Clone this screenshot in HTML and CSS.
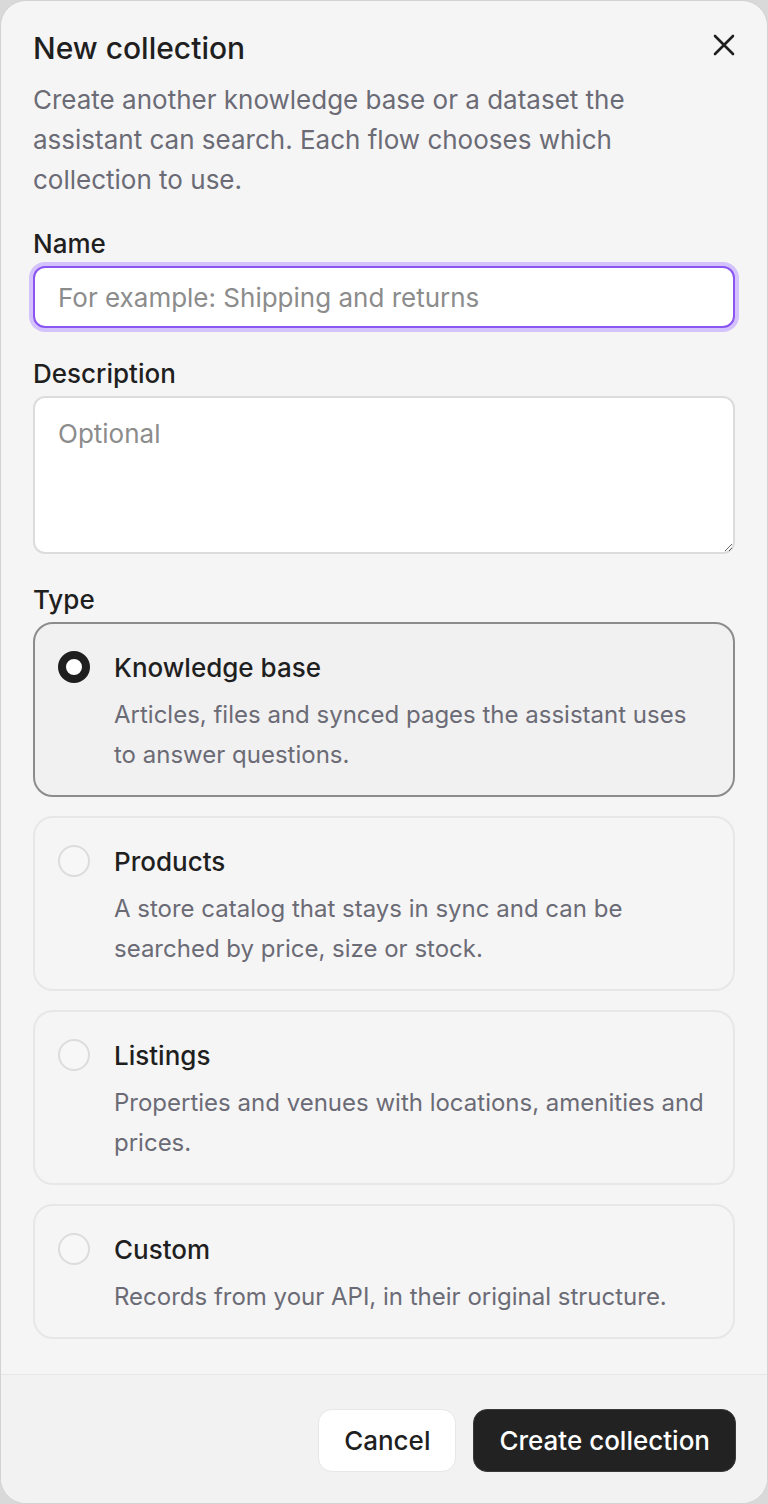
FILE: index.html
```html
<!DOCTYPE html>
<html lang="en">
<head>
<meta charset="utf-8">
<title>New collection</title>
<link rel="stylesheet" href="styles.css">
</head>
<body>
<div class="dialog">
  <div class="content">
    <div class="header">
      <h1 class="title">New collection</h1>
      <button class="close" aria-label="Close">
        <svg width="24" height="24" viewBox="0 0 24 24" fill="none" stroke="#1f1f1f" stroke-width="2.6" stroke-linecap="round"><path d="M3 3L21 21M21 3L3 21"/></svg>
      </button>
    </div>
    <p class="lead">Create another knowledge base or a dataset the assistant can search. Each flow chooses which collection to use.</p>

    <label class="label label-first">Name</label>
    <input class="input" type="text" placeholder="For example: Shipping and returns">

    <label class="label">Description</label>
    <textarea class="textarea" placeholder="Optional"></textarea>

    <div class="label">Type</div>
    <div class="options">
      <div class="option option-selected">
        <span class="radio radio-on"></span>
        <div class="option-text">
          <div class="option-title">Knowledge base</div>
          <div class="option-desc">Articles, files and synced pages the assistant uses to answer questions.</div>
        </div>
      </div>
      <div class="option">
        <span class="radio"></span>
        <div class="option-text">
          <div class="option-title">Products</div>
          <div class="option-desc">A store catalog that stays in sync and can be searched by price, size or stock.</div>
        </div>
      </div>
      <div class="option">
        <span class="radio"></span>
        <div class="option-text">
          <div class="option-title">Listings</div>
          <div class="option-desc">Properties and venues with locations, amenities and prices.</div>
        </div>
      </div>
      <div class="option">
        <span class="radio"></span>
        <div class="option-text">
          <div class="option-title">Custom</div>
          <div class="option-desc">Records from your API, in their original structure.</div>
        </div>
      </div>
    </div>
  </div>
  <div class="footer">
    <button class="btn btn-secondary">Cancel</button>
    <button class="btn btn-primary">Create collection</button>
  </div>
</div>
</body>
</html>
```

FILE: styles.css
```css
* { box-sizing: border-box; }
html, body { margin: 0; padding: 0; }
body {
  background: #d9d9d9;
  font-family: Inter, "Noto Sans", "Liberation Sans", sans-serif;
  color: #1f1f1f;
}
.dialog {
  width: 768px;
  height: 1504px;
  background: #f5f5f5;
  border: 1px solid #d2d2d2;
  border-radius: 26px;
  display: flex;
  flex-direction: column;
  overflow: hidden;
}
.content {
  flex: 1;
  padding: 29px 32px 0 32px;
}
.header {
  display: flex;
  justify-content: space-between;
  align-items: flex-start;
}
.title {
  margin: 0;
  font-size: 30px;
  line-height: 36px;
  font-weight: 500;
  color: #1f1f1f;
}
.close {
  background: none;
  border: 0;
  padding: 0;
  margin: 3px -1px 0 0;
  width: 24px;
  height: 24px;
  display: flex;
  cursor: pointer;
}
.lead {
  margin: 14px 0 0 0;
  font-size: 26px;
  line-height: 40px;
  color: #6b6b76;
  max-width: 615px;
}
.label {
  display: block;
  margin-top: 30px;
  font-size: 26px;
  line-height: 32px;
  font-weight: 500;
  color: #1f1f1f;
}
.label-first { margin-top: 28px; }
.input {
  display: block;
  width: 100%;
  height: 62px;
  margin-top: 6px;
  padding: 0 23px;
  border: 2px solid #8a55f0;
  border-radius: 12px;
  box-shadow: 0 0 0 4px #d3c2fb;
  background: #fff;
  font-family: inherit;
  font-size: 26px;
  color: #1f1f1f;
  outline: none;
}
.input::placeholder, .textarea::placeholder { color: #8c8c8c; }
.textarea {
  display: block;
  width: 100%;
  height: 158px;
  margin-top: 6px;
  padding: 20px 23px;
  border: 2px solid #dcdcdf;
  border-radius: 12px;
  background: #fff;
  font-family: inherit;
  font-size: 26px;
  line-height: 32px;
  color: #1f1f1f;
  outline: none;
  resize: vertical;
}
.options {
  display: flex;
  flex-direction: column;
  gap: 19px;
  margin-top: 6px;
}
.option {
  display: flex;
  align-items: flex-start;
  gap: 24px;
  padding: 28px 23px 20px 23px;
  border: 2px solid #e7e7ea;
  border-radius: 20px;
  background: #f5f5f5;
}
.option-selected {
  border-color: #8c8c8c;
  background: #f1f1f1;
}
.radio {
  flex: none;
  width: 32px;
  height: 32px;
  margin-top: -1px;
  border-radius: 50%;
  border: 2px solid #dcdcdf;
  background: #f7f7f7;
}
.radio-on {
  border: 8px solid #1f1f1f;
  background: #fff;
}
.option-title {
  font-size: 26px;
  line-height: 32px;
  font-weight: 500;
  color: #1f1f1f;
}
.option-desc {
  margin-top: 11px;
  font-size: 24px;
  line-height: 40px;
  color: #6b6b76;
}
.footer {
  display: flex;
  justify-content: flex-end;
  gap: 17px;
  padding: 34px 31px 31px 31px;
  border-top: 1px solid #e6e6ea;
  background: #f2f2f2;
}
.btn {
  height: 63px;
  padding: 0 25px;
  border-radius: 14px;
  font-family: inherit;
  font-size: 26px;
  font-weight: 500;
  cursor: pointer;
}
.btn-secondary {
  background: #fff;
  border: 1px solid #e7e7ea;
  color: #1f1f1f;
}
.btn-primary {
  background: #222222;
  border: 1px solid #3a3a3a;
  color: #fff;
}
```
